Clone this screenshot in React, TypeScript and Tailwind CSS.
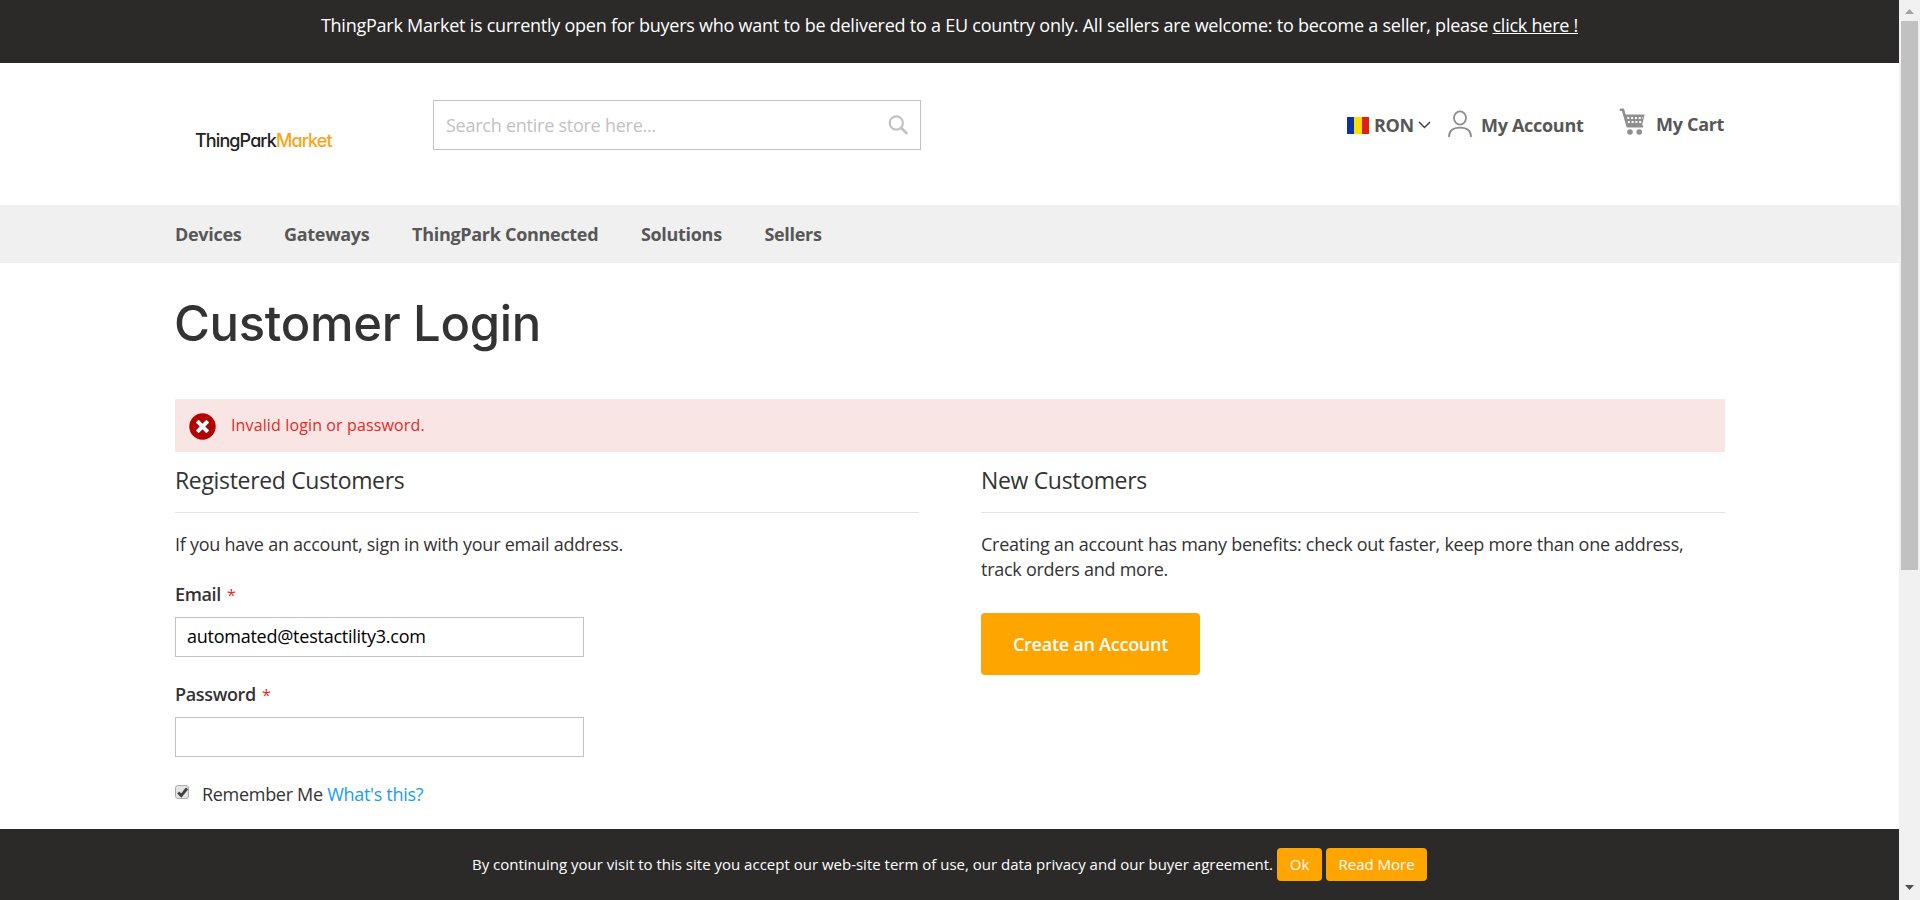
import React from "react";

const navItems = ["Devices", "Gateways", "ThingPark Connected", "Solutions", "Sellers"];

function SearchIcon() {
  return (
    <svg width="20" height="20" viewBox="0 0 20 20" fill="none" stroke="#c2c2c2">
      <circle cx="8.3" cy="8" r="6.6" strokeWidth="2.1" />
      <path d="M13.2 13 18.4 18" strokeWidth="2.8" strokeLinecap="round" />
    </svg>
  );
}

function UserIcon() {
  return (
    <svg width="24" height="28" viewBox="0 0 24 28" fill="none" stroke="#8f8f8f" strokeWidth="1.8">
      <ellipse cx="12" cy="8" rx="6" ry="6.6" />
      <path d="M1 27c0-6 4-9.3 11-9.3S23 21 23 27" />
    </svg>
  );
}

function CartIcon() {
  return (
    <svg width="26" height="27" viewBox="0 0 26 27" fill="none" stroke="#8f8f8f">
      <path d="M1.8 1.8H4L8.6 18.2H23" strokeWidth="2.6" strokeLinecap="round" strokeLinejoin="round" />
      <path d="M5.5 6.5H25.6L23.2 17H8.3Z" fill="#8f8f8f" stroke="none" />
      <path d="M8.3 10H24M8.8 14H23.2" stroke="#fff" strokeWidth="2" strokeDasharray="2 1.8" />
      <circle cx="11" cy="24" r="2.8" fill="#8f8f8f" stroke="none" />
      <circle cx="20.2" cy="24" r="2.8" fill="#8f8f8f" stroke="none" />
    </svg>
  );
}

function Header() {
  return (
    <header className="flex h-[142px] shrink-0 pl-[195px]">
      <a className="mt-[66px] h-6 w-[238px] whitespace-nowrap font-['Inter'] text-[18px] leading-6 font-medium tracking-[-0.9px] text-[#222] [font-feature-settings:'cv11']">
        ThingPark<span className="font-medium text-[#f9a51b]">Market</span>
      </a>
      <div className="mt-[37px] flex h-[50px] w-[488px] items-center justify-between border border-[#c2c2c2] pr-3 pl-3 text-lg text-[#c2c2c2]">
        <span>Search entire store here...</span>
        <SearchIcon />
      </div>
      <div className="mt-[46px] ml-[426px] flex h-8 items-center text-lg leading-8 font-bold tracking-[-0.3px] whitespace-nowrap text-[#575757]">
        <div className="flex w-[101px] items-center">
          <span className="mr-[5px] flex h-[17px] w-[22px]">
            <span className="flex-1 bg-[#0a32a0]" />
            <span className="flex-1 bg-[#ffde00]" />
            <span className="flex-1 bg-[#e02010]" />
          </span>
          RON
          <svg className="ml-1" width="13" height="8" viewBox="0 0 13 8" fill="none" stroke="#444" strokeWidth="1.5">
            <path d="M1 1l5.5 5.5L12 1" />
          </svg>
        </div>
        <div className="flex w-[171px] items-center">
          <span className="mr-[9px] -mt-0.5">
            <UserIcon />
          </span>
          My Account
        </div>
        <div className="flex items-center">
          <span className="mr-[11px] -mt-2">
            <CartIcon />
          </span>
          <span className="-mt-0.5">My Cart</span>
        </div>
      </div>
    </header>
  );
}

function Field({ label, value }: { label: string; value?: string }) {
  return (
    <div className="h-[100px]">
      <div className="h-[35px] text-lg leading-[24px] font-semibold tracking-[-0.35px] text-[#333]">
        {label}
        <span className="ml-[6px] text-base font-normal text-[#e02b27]">*</span>
      </div>
      <div className="h-10 w-[409px] border border-[#c2c2c2] px-[11px] text-lg leading-[36px] text-black">{value}</div>
    </div>
  );
}

function Login() {
  return (
    <main className="grow pr-[174px] pl-[175px] text-lg text-[#333]">
      <h1 className="mt-[28px] -ml-px h-[66px] font-['Inter'] text-[49px] leading-[66px] font-medium tracking-[-0.32px] whitespace-nowrap">
        Customer Login
      </h1>
      <div className="mt-[42px] flex h-[53px] items-center bg-[#fae5e5] pl-[14px] text-base tracking-[0.13px] text-[#e02b27]">
        <svg className="mt-0.5 mr-[15px]" width="27" height="27" viewBox="0 0 27 27">
          <circle cx="13.5" cy="13.5" r="13.2" fill="#b30000" />
          <path d="M8.2 8.2l10.6 10.6M18.8 8.2L8.2 18.8" stroke="#fff" strokeWidth="4" />
        </svg>
        <span className="-mt-0.5">Invalid login or password.</span>
      </div>
      <div className="flex gap-[62px]">
        <section className="w-[744px]">
          <h2 className="h-[61px] border-b border-[#e4e4e4] text-[23px] leading-[56px] font-normal tracking-[-0.33px]">Registered Customers</h2>
          <p className="mt-[19px] h-[48px] leading-[25px]">If you have an account, sign in with your email address.</p>
          <div className="pt-[2px]">
            <Field label="Email" value="automated@testactility3.com" />
            <Field label="Password" />
          </div>
          <div className="-mt-0.5 flex h-7 items-center tracking-[-0.3px]">
            <span className="mb-1 mr-[13px] flex h-[14px] w-[14px] items-center justify-center rounded-[3px] border border-[#adadad] bg-[#e4e4e4]">
              <svg width="11" height="11" viewBox="0 0 11 11" fill="none" stroke="#404040" strokeWidth="2.8">
                <path d="M1.2 5.6l3 3L10 1.5" />
              </svg>
            </span>
            <span>
              Remember Me <a className="text-[#1a9cf0]">What's this?</a>
            </span>
          </div>
        </section>
        <section className="w-[744px]">
          <h2 className="h-[61px] border-b border-[#e4e4e4] text-[23px] leading-[56px] font-normal tracking-[-0.33px]">New Customers</h2>
          <p className="mt-[19px] leading-[25px] tracking-[-0.265px]">
            Creating an account has many benefits: check out faster, keep more than one address,
            <br />
            track orders and more.
          </p>
          <button className="mt-[31px] h-[62px] w-[219px] rounded-[4px] bg-[#ffa500] pb-px text-lg font-semibold tracking-[-0.25px] whitespace-nowrap text-white">
            Create an Account
          </button>
        </section>
      </div>
    </main>
  );
}

function Scrollbar() {
  return (
    <div className="flex w-[21px] flex-col items-center bg-[#f1f1f1]">
      <div className="flex h-[21px] items-center justify-center pt-0.5">
        <svg width="9" height="5" viewBox="0 0 9 5" fill="#a3a3a3">
          <path d="M0 5L4.5 0 9 5z" />
        </svg>
      </div>
      <div className="h-[549px] w-[17px] bg-[#c1c1c1]" />
      <div className="mt-auto flex h-[21px] items-center justify-center pb-1">
        <svg width="9" height="5" viewBox="0 0 9 5" fill="#505050">
          <path d="M0 0L4.5 5 9 0z" />
        </svg>
      </div>
    </div>
  );
}

export default function App() {
  return (
    <div className="flex h-[900px] w-[1920px] overflow-hidden bg-white font-['Open_Sans',sans-serif] tracking-[-0.25px]">
      <div className="flex w-[1899px] flex-col">
        <div className="h-[63px] shrink-0 bg-[#2b2a29] pt-[13px] text-center text-lg leading-6 tracking-[-0.24px] whitespace-nowrap text-white">
          ThingPark Market is currently open for buyers who want to be delivered to a EU country only. All sellers are welcome: to become a seller, please{" "}
          <a className="underline">click here !</a>
        </div>
        <Header />
        <nav className="flex h-[58px] shrink-0 gap-[42.6px] bg-[#f0f0f0] pl-[175px] text-lg leading-[58px] font-bold tracking-[-0.3px] text-[#575757]">
          {navItems.map((item) => (
            <a key={item}>{item}</a>
          ))}
        </nav>
        <Login />
        <footer className="flex h-[71px] shrink-0 items-center justify-center gap-1 bg-[#2b2a29] text-[15px] tracking-normal whitespace-nowrap text-white">
          <span>By continuing your visit to this site you accept our web-site term of use, our data privacy and our buyer agreement.</span>
          <button className="h-[33px] w-[45px] rounded-[4px] bg-[#ffa500]">Ok</button>
          <button className="h-[33px] w-[101px] rounded-[4px] bg-[#ffa500]">Read More</button>
        </footer>
      </div>
      <Scrollbar />
    </div>
  );
}
